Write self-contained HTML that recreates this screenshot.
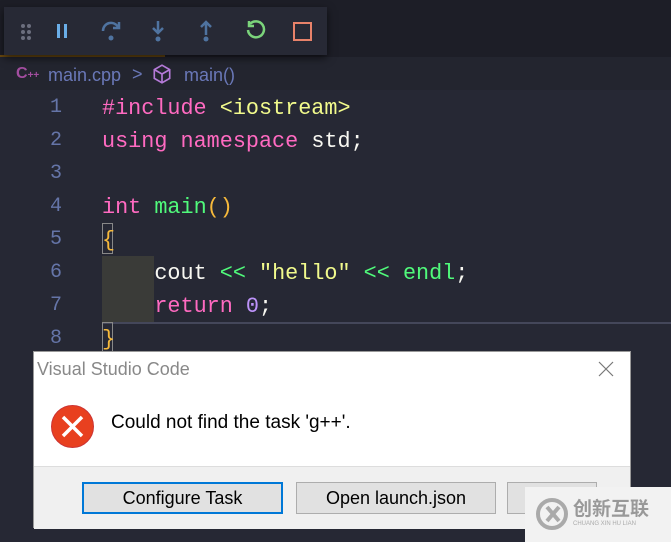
<!DOCTYPE html><html><head><style>
body{margin:0;width:671px;height:542px;overflow:hidden;background:#262834;position:relative;font-family:"Liberation Sans",sans-serif}
.top{position:absolute;left:0;top:0;width:671px;height:57px;background:#1d1e27}
.crumb{position:absolute;left:0;top:57px;width:671px;height:33px;background:#23252f;color:#6a78b8;font-size:18px}
.tb{position:absolute;left:4px;top:7px;width:323px;height:48px;background:#272935;box-shadow:0 3px 8px rgba(0,0,0,.6)}
.code{position:absolute;font-family:"Liberation Mono",monospace;font-size:21.8px;white-space:pre;line-height:33px}
.ln{position:absolute;left:40px;width:22px;text-align:right;color:#6575a8;font-family:"Liberation Mono",monospace;font-size:20px;line-height:33px}
.p{color:#ff6ac1}.y{color:#f1fa8c}.g{color:#50fa7b}.w{color:#f8f8f2}.o{color:#f6b93b}.v{color:#bd93f9}
.dlg{position:absolute;left:33px;top:351px;width:598px;height:177px;background:#fff;border:1px solid #999;box-sizing:border-box}
.foot{position:absolute;left:0;top:114px;width:596px;height:62px;background:#f0f0f0;border-top:1px solid #ddd}
.btn{position:absolute;top:15px;height:32px;background:#e1e1e1;border:1px solid #adadad;box-sizing:border-box;font-size:18px;text-align:center;line-height:30px;color:#000}
</style></head><body>
<div class="top"></div>
<div style="position:absolute;left:0;top:55px;width:165px;height:2px;background:#6b4a10"></div>
<div class="crumb">
<span style="position:absolute;left:16px;top:8px;color:#a34ea0;font-weight:bold;font-size:16px">C<span style="font-size:10px">++</span></span>
<span style="position:absolute;left:48px;top:8px">main.cpp</span>
<span style="position:absolute;left:132px;top:7px;color:#6a78b8">&gt;</span>
<svg style="position:absolute;left:151px;top:6px" width="22" height="22" viewBox="0 0 20 20" fill="none" stroke="#b57ad8" stroke-width="1.5"><path d="M10 2L17 6V14L10 18L3 14V6Z M3 6L10 10L17 6 M10 10V18"/></svg>
<span style="position:absolute;left:184px;top:8px">main()</span>
</div>
<div class="tb">
<svg width="323" height="48">
<g fill="#6b6e7d"><circle cx="19" cy="19" r="2"/><circle cx="25" cy="19" r="2"/><circle cx="19" cy="25" r="2"/><circle cx="25" cy="25" r="2"/><circle cx="19" cy="31" r="2"/><circle cx="25" cy="31" r="2"/></g>
<g fill="#6aaee8"><rect x="53" y="17" width="3" height="14"/><rect x="60" y="17" width="3" height="14"/></g>
<g stroke="#4f73a0" stroke-width="2.5" fill="none"><path d="M99 24a8 8 0 0 1 15-4"/><path d="M115 15v6h-6"/></g><circle cx="107" cy="31" r="2.5" fill="#4f73a0"/>
<path d="M154 14v11M149 21l5 5 5-5" stroke="#4f73a0" stroke-width="2.5" fill="none"/><circle cx="154" cy="32" r="2.5" fill="#4f73a0"/>
<path d="M202 28V16M197 20l5-5 5 5" stroke="#4f73a0" stroke-width="2.5" fill="none"/><circle cx="202" cy="32" r="2.5" fill="#4f73a0"/>
<path d="M246 17a8 8 0 1 1-2 6" stroke="#7bd47b" stroke-width="2.5" fill="none"/><path d="M245 14v5h5" stroke="#7bd47b" stroke-width="2.5" fill="none"/>
<rect x="290" y="16" width="17" height="17" stroke="#e8826a" stroke-width="2" fill="none"/>
</svg></div>
<div class="ln" style="top:91px">1</div><div class="ln" style="top:124px">2</div><div class="ln" style="top:157px">3</div><div class="ln" style="top:190px">4</div><div class="ln" style="top:223px">5</div><div class="ln" style="top:256px">6</div><div class="ln" style="top:289px">7</div><div class="ln" style="top:322px">8</div>
<div style="position:absolute;left:102px;top:256px;width:52px;height:66px;background:#3a3b38"></div>
<div style="position:absolute;left:102px;top:322px;width:569px;height:2px;background:#44475a"></div>
<div style="position:absolute;left:102px;top:223px;width:11px;height:31px;border:1px solid #888;box-sizing:border-box"></div>
<div style="position:absolute;left:102px;top:322px;width:11px;height:30px;border:1px solid #888;box-sizing:border-box"></div>
<div class="code" style="left:102px;top:92px"><span class="p">#include</span> <span class="y">&lt;iostream&gt;</span>
<span class="p">using</span> <span class="p">namespace</span> <span class="w">std;</span>

<span class="p">int</span> <span class="g">main</span><span class="o">()</span>
<span class="o">{</span>
    <span class="w">cout</span> <span class="g">&lt;&lt;</span> <span class="y">"hello"</span> <span class="g">&lt;&lt;</span> <span class="g">endl</span><span class="w">;</span>
    <span class="p">return</span> <span class="v">0</span><span class="w">;</span>
<span class="o">}</span></div>
<div class="dlg">
<div style="position:absolute;left:3px;top:7px;font-size:18px;color:#888">Visual Studio Code</div>
<svg style="position:absolute;left:564px;top:9px" width="16" height="16"><path d="M1 1L15 15M15 1L1 15" stroke="#777" stroke-width="1.2"/></svg>
<svg style="position:absolute;left:16px;top:52px" width="45" height="45"><circle cx="22.5" cy="22.5" r="21" fill="#e8401f" stroke="#c33" stroke-width="1"/><path d="M13 13L32 32M32 13L13 32" stroke="#fff" stroke-width="3.5"/></svg>
<div style="position:absolute;left:77px;top:60px;font-size:19px;color:#000">Could not find the task 'g++'.</div>
<div class="foot">
<div class="btn" style="left:48px;width:201px;border:2px solid #0078d7;line-height:28px">Configure Task</div>
<div class="btn" style="left:262px;width:200px">Open launch.json</div>
<div class="btn" style="left:473px;width:90px"></div>
</div></div>
<div style="position:absolute;left:525px;top:487px;width:146px;height:55px;background:#f2f2f2">
<svg style="position:absolute;left:10px;top:10px" width="34" height="34"><circle cx="17" cy="17" r="14" stroke="#aaa" stroke-width="4" fill="none"/><path d="M12 10L24 24M24 10L12 24" stroke="#aaa" stroke-width="4"/></svg>
<div style="position:absolute;left:48px;top:10px;font-size:19px;color:#999;font-family:'Noto Sans CJK SC',sans-serif;font-weight:bold;line-height:22px">创新互联</div>
<div style="position:absolute;left:48px;top:34px;font-size:6px;color:#aaa">CHUANG XIN HU LIAN</div>
</div>
</body></html>
